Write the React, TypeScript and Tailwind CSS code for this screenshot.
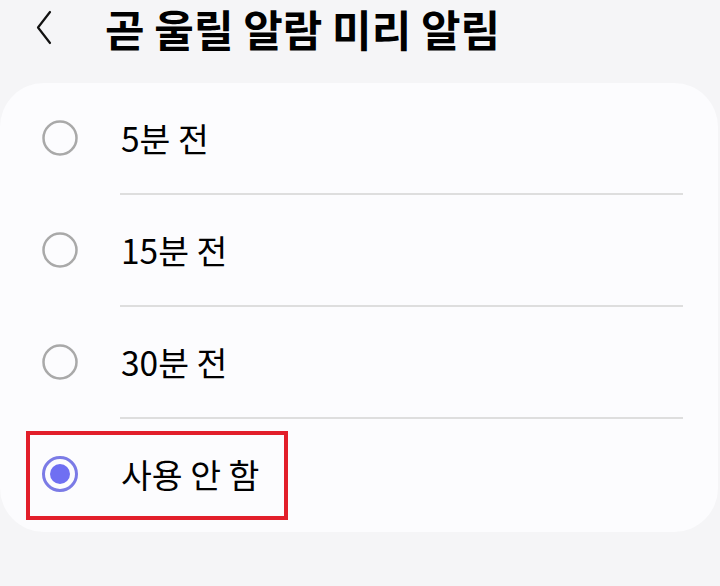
import React from "react";

const options = ["5분 전", "15분 전", "30분 전", "사용 안 함"];
const selected = 3;

function Radio({ on }: { on: boolean }) {
  return (
    <svg width="38" height="38" viewBox="0 0 38 38">
      {on ? (
        <>
          <circle cx="19" cy="19" r="16.5" fill="none" stroke="#7b7be6" strokeWidth="3" />
          <circle cx="19" cy="19" r="10" fill="#6f6ff2" />
        </>
      ) : (
        <circle cx="19" cy="19" r="16.5" fill="none" stroke="#a9a9a9" strokeWidth="2.5" />
      )}
    </svg>
  );
}

export default function App() {
  return (
    <div
      className="w-[720px] h-[586px] bg-[#f5f5f7] overflow-hidden"
      style={{ fontFamily: '"Noto Sans CJK KR", "Noto Sans", sans-serif' }}
    >
      <div className="flex items-center h-[56px] pl-[36px]">
        <svg width="18" height="36" viewBox="0 0 18 36">
          <path d="M14 2 L2 17.5 L14 33" fill="none" stroke="#111" strokeWidth="2.2" strokeLinecap="round" strokeLinejoin="round" />
        </svg>
        <h1 className="ml-[51px] text-[43px] font-bold text-black leading-[56px] whitespace-nowrap">
          곧 울릴 알람 미리 알림
        </h1>
      </div>

      <div className="mt-[27px] w-[718px] rounded-[44px] bg-[#fcfcfe] pb-[3px]">
        {options.map((o, i) => (
          <div key={o}>
            <div className="relative flex items-center h-[110px] pl-[41px]">
              <Radio on={i === selected} />
              <span className="ml-[42px] text-[33.5px] text-black leading-none">{o}</span>
              {i === selected && (
                <div className="absolute left-[26px] top-[12px] w-[262px] h-[89px] border-[4px] border-[#e21f2a]" />
              )}
            </div>
            {i < options.length - 1 && (
              <div className="ml-[120px] w-[563px] h-[2px] bg-[#dedede]" />
            )}
          </div>
        ))}
      </div>
    </div>
  );
}
